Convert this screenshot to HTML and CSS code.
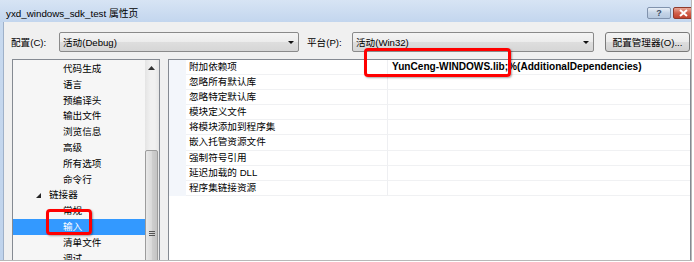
FILE: index.html
```html
<!DOCTYPE html>
<html lang="zh-CN">

<head>
    <meta charset="UTF-8">
    <meta name="viewport" content="width=device-width, initial-scale=1.0">
    <title>yxd_windows_sdk_test 属性页</title>
    <link rel="stylesheet" href="styles.css">
</head>

<body>
    <div class="window">
        <div class="titlebar">
            <span class="title">yxd_windows_sdk_test 属性页</span>
            <div class="caption-btns">
                <span class="cap-btn cap-help">?</span>
                <span class="cap-btn cap-close">
                    <svg width="9" height="8" viewBox="0 0 9 8">
                        <path d="M1 1 L8 7 M8 1 L1 7" stroke="#fff" stroke-width="2" />
                    </svg>
                </span>
            </div>
        </div>

        <div class="client">
            <div class="toolbar">
                <label class="lbl lbl-config">配置(C):</label>
                <div class="combo combo-config">
                    <span>活动(Debug)</span>
                    <span class="combo-arrow"></span>
                </div>
                <label class="lbl lbl-platform">平台(P):</label>
                <div class="combo combo-platform">
                    <span>活动(Win32)</span>
                    <span class="combo-arrow"></span>
                </div>
                <button class="btn-manager">配置管理器(O)...</button>
            </div>

            <div class="panes">
                <div class="tree">
                    <ul class="tree-list">
                        <li class="item">代码生成</li>
                        <li class="item">语言</li>
                        <li class="item">预编译头</li>
                        <li class="item">输出文件</li>
                        <li class="item">浏览信息</li>
                        <li class="item">高级</li>
                        <li class="item">所有选项</li>
                        <li class="item">命令行</li>
                        <li class="item item-group">
                            <svg class="expander" width="5" height="5" viewBox="0 0 5 5">
                                <path d="M5 0 L5 5 L0 5 Z" fill="#262626" />
                            </svg>
                            链接器
                        </li>
                        <li class="item">常规</li>
                        <li class="item item-selected">输入</li>
                        <li class="item">清单文件</li>
                        <li class="item">调试</li>
                    </ul>
                    <div class="vscroll">
                        <div class="vscroll-up">
                            <svg width="7" height="4" viewBox="0 0 7 4">
                                <path d="M3.5 0 L7 4 L0 4 Z" fill="#333" />
                            </svg>
                        </div>
                        <div class="vscroll-thumb">
                            <div class="grip"></div>
                        </div>
                    </div>
                </div>

                <div class="grid">
                    <div class="row">
                        <span class="strip"></span>
                        <span class="name">附加依赖项</span>
                        <span class="value value-bold">YunCeng-WINDOWS.lib;%(AdditionalDependencies)</span>
                    </div>
                    <div class="row">
                        <span class="strip"></span>
                        <span class="name">忽略所有默认库</span>
                        <span class="value"></span>
                    </div>
                    <div class="row">
                        <span class="strip"></span>
                        <span class="name">忽略特定默认库</span>
                        <span class="value"></span>
                    </div>
                    <div class="row">
                        <span class="strip"></span>
                        <span class="name">模块定义文件</span>
                        <span class="value"></span>
                    </div>
                    <div class="row">
                        <span class="strip"></span>
                        <span class="name">将模块添加到程序集</span>
                        <span class="value"></span>
                    </div>
                    <div class="row">
                        <span class="strip"></span>
                        <span class="name">嵌入托管资源文件</span>
                        <span class="value"></span>
                    </div>
                    <div class="row">
                        <span class="strip"></span>
                        <span class="name">强制符号引用</span>
                        <span class="value"></span>
                    </div>
                    <div class="row">
                        <span class="strip"></span>
                        <span class="name">延迟加载的 DLL</span>
                        <span class="value"></span>
                    </div>
                    <div class="row">
                        <span class="strip"></span>
                        <span class="name">程序集链接资源</span>
                        <span class="value"></span>
                    </div>
                </div>
            </div>
        </div>

        <!-- red highlight boxes drawn over the dialog -->
        <div class="mark mark-input"></div>
        <div class="mark mark-value"></div>
    </div>
</body>

</html>
```

FILE: styles.css
```css
html,
body {
    margin: 0;
    background-color: #ffffff;
}

body {
    font-family: "Liberation Sans", "Noto Sans CJK SC", sans-serif;
    font-size: 9.6px;
    color: #000;
}

.window {
    position: relative;
    box-sizing: border-box;
    width: 692px;
    height: 261px;
    overflow: hidden;
    display: flex;
    flex-direction: column;
    background: linear-gradient(#c9daef, #bfd3ec);
    border-right: 1px solid #b8b8b8;
    border-bottom: 1px solid #b8b8b8;
}

/* title bar */

.titlebar {
    height: 22px;
    flex: none;
    display: flex;
    justify-content: space-between;
    background: linear-gradient(#d7e4f4, #c3d6ee);
}

.title {
    padding: 8px 0 0 6px;
    line-height: 12px;
    font-size: 9.8px;
}

.caption-btns {
    display: flex;
    gap: 2px;
    padding-top: 7px;
}

.cap-btn {
    box-sizing: border-box;
    height: 12px;
    display: flex;
    align-items: center;
    justify-content: center;
    border-radius: 2px;
}

.cap-help {
    width: 24px;
    border: 1px solid #8193ad;
    background: linear-gradient(#e9f0f8, #c4d3e6 50%, #b5c8df);
    color: #3d4c63;
    font-weight: bold;
    font-size: 9px;
}

.cap-close {
    width: 20px;
    margin-right: -2px;
    border: 1px solid #8e3a2c;
    background: linear-gradient(#e9a595, #d2604b 50%, #c0412c);
}

/* client area */

.client {
    flex: 1;
    margin-left: 3px;
    border-left: 1px solid #9fb1c9;
    background-color: #f0f0f0;
    display: flex;
    flex-direction: column;
    min-height: 0;
}

.toolbar {
    display: flex;
    align-items: center;
    height: 20px;
    margin-top: 10px;
    padding-left: 7px;
}

.lbl {
    flex: none;
}

.lbl-config {
    width: 48px;
}

.lbl-platform {
    width: 45px;
    margin-left: 8px;
}

.combo {
    box-sizing: border-box;
    height: 20px;
    display: flex;
    align-items: center;
    justify-content: space-between;
    padding: 0 4px 0 3px;
    border: 1px solid #8a8a8a;
    border-radius: 2px;
    background: linear-gradient(#f4f4f4, #ececec 50%, #dedede 51%, #d6d6d6);
}

.combo-config {
    width: 240px;
}

.combo-platform {
    width: 242px;
}

.combo-arrow {
    width: 0;
    height: 0;
    border-left: 3px solid transparent;
    border-right: 3px solid transparent;
    border-top: 3px solid #111;
}

.btn-manager {
    box-sizing: border-box;
    width: 85px;
    height: 20px;
    margin-left: 11px;
    padding: 0;
    font-family: inherit;
    font-size: 9.6px;
    color: #000;
    border: 1px solid #7a7a7a;
    border-radius: 3px;
    background: linear-gradient(#f4f4f4, #ebebeb 50%, #dddddd 51%, #d1d1d1);
}

.panes {
    flex: 1;
    display: flex;
    gap: 8px;
    margin-top: 7px;
    padding-left: 8px;
    min-height: 0;
}

/* left tree */

.tree {
    width: 148px;
    height: 220px;
    box-sizing: border-box;
    flex: none;
    display: flex;
    border: 1px solid #858a92;
    background-color: #f6f6f6;
}

.tree-list {
    list-style: none;
    margin: 0;
    padding: 1px 0 0;
    width: 132px;
}

.item {
    height: 15.8px;
    line-height: 15.8px;
    padding-left: 50px;
    white-space: nowrap;
}

.item-group {
    padding-left: 23px;
    display: flex;
    align-items: center;
}

.expander {
    margin-right: 8px;
}

.item-selected {
    background-color: #3399ff;
    color: #fff;
}

.vscroll {
    width: 14px;
    display: flex;
    flex-direction: column;
    background: linear-gradient(90deg, #e4e4e4, #f1f1f1 40%, #f1f1f1 70%, #e6e6e6);
}

.vscroll-up {
    height: 17px;
    display: flex;
    align-items: center;
    justify-content: center;
    padding-right: 1px;
}

.vscroll-thumb {
    box-sizing: border-box;
    width: 13px;
    height: 130px;
    margin-top: 73px;
    border: 1px solid #9c9c9c;
    border-radius: 2px;
    background: linear-gradient(90deg, #e9e9e9, #dadada 50%, #cfcfcf 51%, #c4c4c4);
    display: flex;
    justify-content: center;
}

.grip {
    width: 6px;
    height: 5px;
    margin-top: 80px;
    background: repeating-linear-gradient(#555 0 1px, transparent 1px 2px);
}

/* right property grid */

.grid {
    flex: 1;
    height: 220px;
    box-sizing: border-box;
    border: 1px solid #858a92;
    background-color: #ffffff;
}

.row {
    display: grid;
    grid-template-columns: 17px 202px 1fr;
    height: 15.1px;
}

.strip {
    background-color: #f3f6fb;
}

.name,
.value {
    box-sizing: border-box;
    border-bottom: 1px solid #f0f1f3;
    line-height: 14.1px;
    white-space: nowrap;
}

.name {
    padding-left: 3px;
    border-right: 1px solid #eeeff2;
}

.value {
    padding-left: 4px;
}

.value-bold {
    font-weight: bold;
    font-size: 10.1px;
}

/* annotation boxes */

.mark {
    position: absolute;
    box-sizing: border-box;
    border: 3px solid #ff0000;
    border-radius: 4px;
    box-shadow: 1px 1px 2px rgba(0, 0, 0, 0.35);
}

.mark-input {
    left: 46px;
    top: 209px;
    width: 46px;
    height: 26px;
}

.mark-value {
    left: 364px;
    top: 48px;
    width: 147px;
    height: 29px;
}
```
